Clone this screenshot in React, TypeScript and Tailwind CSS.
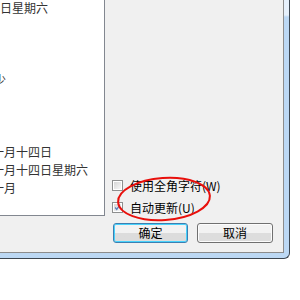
import React from "react";

const cjk = "font-['SimSun','Noto_Sans_CJK_SC',sans-serif]";

const lines: { text: string; offset: number }[] = [
  { text: "日星期六", offset: 0 },
  { text: "", offset: 0 },
  { text: "", offset: 0 },
  { text: "", offset: 0 },
  { text: "少", offset: -6 },
  { text: "", offset: 0 },
  { text: "", offset: 0 },
  { text: "", offset: 0 },
  { text: "一月十四日", offset: -8 },
  { text: "一月十四日星期六", offset: -8 },
  { text: "一月", offset: -8 },
];

function Checkbox({ checked }: { checked?: boolean }) {
  return (
    <div className="w-[11px] h-[11px] border border-[#8e8f8f] bg-white p-px flex-none">
      <div className="relative w-full h-full bg-linear-to-br from-[#d6d6d6] to-[#f7f7f7]">
        {checked && (
          <svg viewBox="0 0 9 9" className="absolute inset-0 w-full h-full">
            <path d="M1.5 4.5 L3.5 7 L7.5 1.5" fill="none" stroke="#5b7fb8" strokeWidth="1.6" />
          </svg>
        )}
      </div>
    </div>
  );
}

export default function App() {
  return (
    <div className={`relative w-[300px] h-[300px] bg-white overflow-hidden ${cjk}`}>
      <div className="w-[290px] h-[259px] border-r border-b border-[#3d4650] rounded-br-[6px] bg-linear-to-b from-[#e6f0fb] from-[15px] to-[#bcd8f4] to-[17px] pr-[5px] pb-[5px]">
        <div className="w-[284px] h-[253px] bg-[#f0f0f0] border-r border-b border-[#8c8c8c] flex flex-col">
          <div className="flex">
            <div className="w-[105px] h-[216px] bg-white border-r border-b border-[#828790] overflow-hidden text-[12px] leading-[18px] text-[#333] pt-[-1px]">
              <div className="-mt-px">
                {lines.map((l, i) => (
                  <div key={i} className="h-[18px] whitespace-nowrap" style={{ marginLeft: l.offset }}>
                    {l.text}
                  </div>
                ))}
              </div>
            </div>
            <div className="flex-1 flex flex-col justify-end pl-[7px] pb-[3px] gap-[11px] text-[12px] text-black">
              <div className="flex items-center gap-[7px] h-[11px]">
                <Checkbox />
                <span className="whitespace-nowrap">使用全角字符(W)</span>
              </div>
              <div className="flex items-center gap-[7px] h-[11px]">
                <Checkbox checked />
                <span className="whitespace-nowrap">自动更新(U)</span>
              </div>
            </div>
          </div>
          <div className="flex gap-[9px] pl-[113px] pt-[7px] text-[12px] text-black">
            <button className="w-[75px] h-[20px] rounded-[3px] border border-[#3c7fb1] shadow-[inset_0_0_0_1px_#48d2fc] bg-linear-to-b from-[#f2f2f2] from-50% to-[#dcdcdc] to-50% leading-none">
              确定
            </button>
            <button className="w-[76px] h-[20px] rounded-[3px] border border-[#707070] shadow-[inset_0_0_0_1px_#fcfcfc] bg-linear-to-b from-[#f2f2f2] from-50% to-[#dddddd] to-50% leading-none">
              取消
            </button>
          </div>
        </div>
      </div>
      <svg className="absolute inset-0 pointer-events-none" width="300" height="300">
        <ellipse cx="164" cy="199" rx="46" ry="21" fill="none" stroke="#e8100c" strokeWidth="2" transform="rotate(-4 164 199)" />
      </svg>
    </div>
  );
}
